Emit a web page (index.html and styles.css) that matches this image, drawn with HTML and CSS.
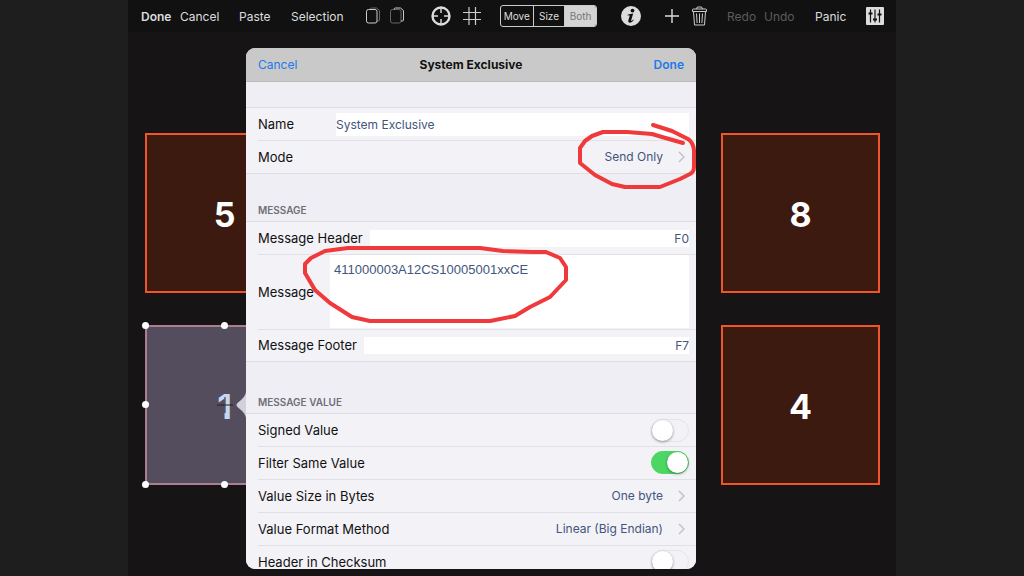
FILE: index.html
```html
<!DOCTYPE html>
<html lang="en">
<head>
<meta charset="utf-8">
<title>System Exclusive</title>
<link rel="stylesheet" href="styles.css">
</head>
<body>
<main class="stage">
  <nav class="toolbar" aria-label="Editor">
    <button class="tool strong">Done</button>
    <button class="tool">Cancel</button>
    <button class="tool">Paste</button>
    <button class="tool">Selection</button>
    <button class="tool" aria-label="Copy"><svg width="16" height="18" viewBox="0 0 16 18" fill="none"><path d="M4 2.500Q4 1 5.500 1H10.500l3 2.500V13q0 1-1.500 1H11" stroke="#666"/><rect x=".5" y="2.500" width="10.500" height="13.500" rx="2" stroke="#ccc"/></svg></button>
    <button class="tool" aria-label="Duplicate"><svg width="16" height="18" viewBox="0 0 16 18" fill="none"><rect x=".5" y="2.500" width="10.500" height="13.500" rx="2" stroke="#666"/><path d="M4 2.500Q4 1 5.500 1H10.500l3 2.500V13q0 1-1.500 1H11" stroke="#ccc"/></svg></button>
    <button class="tool" aria-label="Center"><svg width="20" height="20" viewBox="0 0 20 20" fill="none" stroke="#ddd"><circle cx="10" cy="10" r="8.500" stroke-width="2.400"/><path d="M10 2v5M10 13v5M2 10h5M13 10h5" stroke-width="1.400"/></svg></button>
    <button class="tool" aria-label="Grid"><svg width="18" height="18" viewBox="0 0 18 18" fill="none" stroke="#ccc" stroke-width="1.200"><path d="M6 0v18M12.500 0v18M0 5.500h18M0 12.500h18"/></svg></button>
    <div class="segments" role="group" aria-label="Drag mode">
      <button class="segment">Move</button><button class="segment">Size</button><button class="segment active" aria-pressed="true">Both</button>
    </div>
    <button class="tool" aria-label="Info"><svg width="20" height="20" viewBox="0 0 20 20"><circle cx="10" cy="10" r="10" fill="#ddd"/><circle cx="11.500" cy="4.600" r="1.900" fill="#111"/><path d="M6.500 8.800Q9 8 12.200 7.500L10.200 14.300q-.1.900.5.600.8-.4 1.500-1.400l.6.400Q10.800 17 8.500 16.800 6.800 16.500 7.300 14.600L8.700 9.800q.2-.6-2.200-.4z" fill="#111"/></svg></button>
    <button class="tool" aria-label="Add"><svg width="14" height="14" viewBox="0 0 14 14" stroke="#ddd" stroke-width="1.400"><path d="M7 0v14M0 7h14"/></svg></button>
    <button class="tool" aria-label="Delete"><svg width="15" height="20" viewBox="0 0 15 20" fill="none" stroke="#ccc"><path d="M.5 5.500V4q0-1 1-1h12q1 0 1 1v1.500zM4.500 3l.8-2h4.400l.8 2M1.500 5.500l1 13.500h10l1-13.500M4.500 7.500l.6 9.500M7.500 7.500V17M10.500 7.500L9.900 17"/></svg></button>
    <button class="tool" disabled>Redo</button>
    <button class="tool" disabled>Undo</button>
    <button class="tool">Panic</button>
    <button class="tool" aria-label="Mixer"><svg width="18" height="18" viewBox="0 0 18 18"><rect width="18" height="18" rx="1" fill="#ddd"/><path d="M4.500 2.500v13M9 2.500v13M13.500 2.500v13" stroke="#111" stroke-width="1.200"/><path d="M2.500 6.500h4M7 12.500h4M11.500 7.500h4" stroke="#111" stroke-width="2"/></svg></button>
  </nav>

  <section class="pads" aria-label="Pads">
    <div class="pad">5</div>
    <div class="pad last">8</div>
    <div class="pad selected">1
      <svg class="cross" width="16" height="16" viewBox="0 0 16 16" stroke="#222"><path d="M8 0v16M0 8h16"/></svg>
      <i class="handle nw"></i><i class="handle n"></i><i class="handle w"></i><i class="handle sw"></i><i class="handle s"></i>
    </div>
    <div class="pad last">4</div>
  </section>

  <div class="popover">
    <svg class="arrow" width="10" height="32" viewBox="0 0 10 32"><path d="M10 3Q9.500 7 5 11L1.500 14Q-.5 16 1.500 18L5 21Q9.500 25 10 29z" fill="#d2d0d8"/></svg>
    <form class="sheet">
      <header class="sheet-head">
        <button type="button" class="link">Cancel</button>
        <h1 class="title">System Exclusive</h1>
        <button type="button" class="link strong end">Done</button>
      </header>
      <div class="group first">
        <div class="row"><label class="label name" for="name">Name</label><input class="field tall" id="name" value="System Exclusive"></div>
        <button type="button" class="row"><span class="label">Mode</span><span class="value">Send Only</span><svg class="chevron" width="7" height="12" viewBox="0 0 7 12"><path d="M1 1l5 5-5 5"/></svg></button>
      </div>
      <h2 class="section">MESSAGE</h2>
      <div class="group">
        <div class="row"><label class="label" for="head">Message Header</label><input class="field code" id="head" value="F0"></div>
        <div class="row big"><label class="label message" for="msg">Message</label><textarea class="area" id="msg" spellcheck="false">411000003A12CS10005001xxCE</textarea></div>
        <div class="row short"><label class="label" for="foot">Message Footer</label><input class="field code" id="foot" value="F7"></div>
      </div>
      <h2 class="section lower">MESSAGE VALUE</h2>
      <div class="group">
        <div class="row"><label class="label" for="signed">Signed Value</label><input class="switch" type="checkbox" id="signed"></div>
        <div class="row"><label class="label" for="filter">Filter Same Value</label><input class="switch" type="checkbox" id="filter" checked></div>
        <button type="button" class="row"><span class="label">Value Size in Bytes</span><span class="value">One byte</span><svg class="chevron" width="7" height="12" viewBox="0 0 7 12"><path d="M1 1l5 5-5 5"/></svg></button>
        <button type="button" class="row"><span class="label">Value Format Method</span><span class="value">Linear (Big Endian)</span><svg class="chevron" width="7" height="12" viewBox="0 0 7 12"><path d="M1 1l5 5-5 5"/></svg></button>
        <div class="row"><label class="label" for="sum">Header in Checksum</label><input class="switch" type="checkbox" id="sum"></div>
      </div>
    </form>
  </div>

  <svg class="marks" viewBox="128 0 768 576" aria-hidden="true">
    <path d="M653 125L672 131 688 139Q693 142 694 150V167Q694 172 690 174L680 179 660 187H625L612 184 595 175 580 163V148L585 141 592 136 603 132H627L652 134 662 137 683 143"/>
    <path d="M532 252H546L560 258 566 267V280L550 297 530 307 515 316 490 321H370L352 317 330 303 315 290 305 273V264L311 258 325 251 348 248H480L503 251 532 252"/>
  </svg>
</main>
</body>
</html>
```

FILE: styles.css
```css
* { box-sizing: border-box; }

body {
  margin: 0;
  background: #1e1e1e;
  font-family: Inter, "Liberation Sans", sans-serif;
  font-size: 13px;
}

button, input, textarea { font: inherit; margin: 0; }
button { padding: 0; border: 0; background: none; color: inherit; text-align: left; }

.stage {
  position: relative;
  width: 75%;
  min-height: 100vh;
  margin: 0 auto;
  background: #161415;
  overflow: hidden;
}

.toolbar {
  display: grid;
  grid-template-columns: 39fr 59fr 52fr 75fr 24fr 41fr 32fr 37fr 121fr 44fr 27fr 35fr 37fr 51fr 51fr 30fr;
  align-items: center;
  height: 32px;
  padding-left: 13px;
  background: #111;
  color: #ddd;
  font-size: 12px;
}
.toolbar > * { min-width: 0; }
.tool { display: flex; align-items: center; white-space: nowrap; }
.tool svg { flex: none; }
.tool:disabled { color: #5c5c5c; }
.strong { font-weight: 600; }

.segments {
  display: grid;
  grid-template-columns: repeat(3, 1fr);
  width: 97px;
  height: 22px;
  border: 1px solid #ccc;
  border-radius: 3px;
  overflow: hidden;
  font-size: 10px;
}
.segment { text-align: center; }
.segment + .segment { border-left: 1px solid #ccc; }
.segment.active { background: #d4d4d4; color: #777; }

.pads {
  display: grid;
  grid-template-columns: repeat(4, 1fr);
  grid-auto-rows: 160px;
  gap: 32px 33px;
  padding: 101px 16px 0 17px;
}
.pad {
  position: relative;
  display: flex;
  align-items: center;
  justify-content: center;
  grid-column: 1;
  padding-top: 2px;
  border: 2px solid #f05428;
  background: #3d1a10;
  color: #fff;
  font-size: 34px;
  font-weight: 700;
}
.pad.last { grid-column: 4; }
.pad.selected { border-color: #ac7e8e; background: #544d5e; color: #c8d6f2; }
.cross { position: absolute; left: calc(50% - 8px); top: calc(50% - 8px); }
.handle {
  position: absolute;
  width: 7px;
  height: 7px;
  margin: -4px;
  border-radius: 50%;
  background: #fff;
}
.nw { left: -1px; top: -1px; }
.n { left: 50%; top: -1px; }
.w { left: -1px; top: 50%; }
.sw { left: -1px; top: calc(100% + 2px); }
.s { left: 50%; top: calc(100% + 2px); }

.popover { position: absolute; top: 48px; bottom: 7px; left: 118px; right: 200px; }
.arrow { position: absolute; left: -10px; top: 341px; }
.sheet {
  height: 100%;
  border-radius: 9px;
  background: #efeef4;
  overflow: hidden;
  color: #111;
}
.sheet-head {
  display: grid;
  grid-template-columns: 1fr auto 1fr;
  align-items: center;
  height: 34px;
  padding: 0 12px;
  border-bottom: 1px solid #bbb;
  background: #c9c9c9;
  font-size: 12px;
}
.title { margin: 0; font-size: 12px; font-weight: 700; }
.link { color: #1b7bea; }
.end { text-align: right; }

.group { border: solid #dddde2; border-width: 1px 0; background: #f3f2f7; }
.group.first { margin-top: 25px; }
.row {
  display: flex;
  align-items: center;
  width: 100%;
  height: 33px;
  padding: 0 7px 0 12px;
}
.row:first-child, .row.short { height: 32px; }
.row + .row { background: linear-gradient(#e0e0e5, #e0e0e5) 12px 0 / 100% 1px no-repeat; }
.row.big { height: 75px; }
.label { flex: none; margin-right: 7px; }
.label.name { width: 71px; }
.label.message { width: 65px; }
.field, .area { flex: 1; min-width: 0; border: 0; border-radius: 0; outline: 0; padding: 0; background: #fff; color: #43557c; }
.field { height: 17px; font-size: 12px; }
.field.tall { height: 23px; }
.code { text-align: right; }
.area { height: 73px; padding: 7px 4px; resize: none; font-family: "Liberation Sans", Arial, sans-serif; }
.value { margin-left: auto; color: #43557c; font-size: 12px; }
.chevron { margin: 0 4px 0 15px; fill: none; stroke: #c2c2c8; stroke-width: 1.5; }

.section {
  margin: 0;
  padding: 29px 12px 4px;
  color: #6f6f75;
  font-size: 10px;
  line-height: 14px;
  font-weight: 600;
}
.section.lower { padding-top: 33px; }

.switch {
  appearance: none;
  width: 38px;
  height: 23px;
  margin-left: auto;
  border: 1px solid #e5e4e9;
  border-radius: 12px;
}
.switch::before {
  content: "";
  display: block;
  width: 21px;
  height: 21px;
  border-radius: 50%;
  background: #fff;
  box-shadow: 0 1px 3px #0006;
}
.switch:checked { border-color: #4cd663; background: #4cd663; }
.switch:checked::before { margin-left: auto; }

.marks {
  position: absolute;
  left: 0;
  top: 0;
  width: 100%;
  pointer-events: none;
  fill: none;
  stroke: #ef393b;
  stroke-width: 4;
  stroke-linecap: round;
  stroke-linejoin: round;
}
```
